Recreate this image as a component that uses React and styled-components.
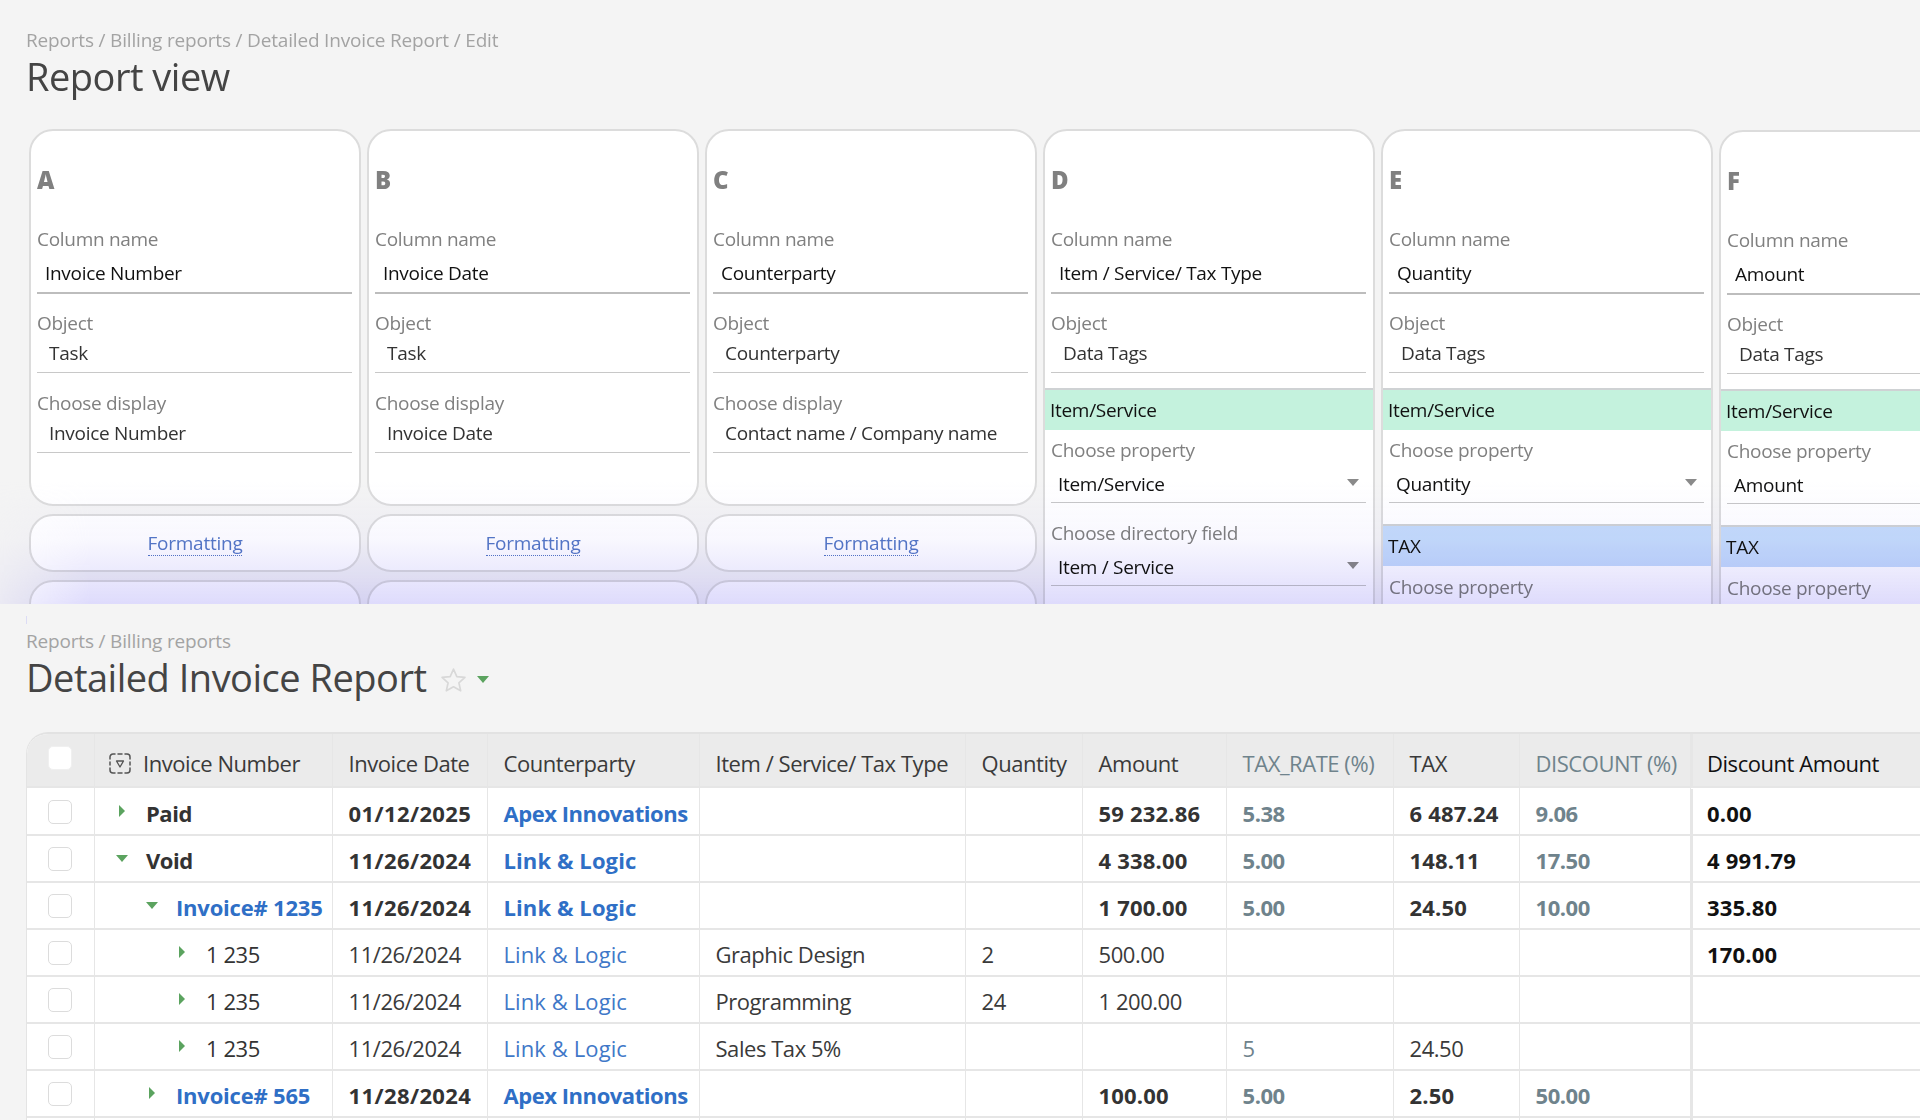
import React from 'react'
import styled, { createGlobalStyle } from 'styled-components'

const font = '"Open Sans", "Noto Sans", sans-serif'

const GlobalStyle = createGlobalStyle`
    html, body {
        margin: 0;
        background: #f4f4f4;
    }
    body {
        font-family: ${font};
        overflow: hidden;
    }
`

const Page = styled.div`
    width: 1920px;
    height: 1120px;
    overflow: hidden;
    background: #f4f4f4;
`

const EditSection = styled.section`
    position: relative;
    isolation: isolate;
    height: 604px;
    overflow: hidden;
    padding: 27px 0 0 26px;
    box-sizing: border-box;
    background: #f4f4f4;

    &::after {
        content: '';
        position: absolute;
        left: 0;
        right: 0;
        bottom: 0;
        height: 124px;
        pointer-events: none;
        mix-blend-mode: multiply;
        background: linear-gradient(
            to bottom,
            rgba(222, 219, 252, 0),
            rgba(222, 219, 252, 0.2) 48%,
            rgba(222, 219, 252, 0.55) 72%,
            rgba(222, 219, 252, 1)
        );
        mask-image: linear-gradient(to right, rgba(0, 0, 0, 0.3), #000 90px);
    }
`

const Breadcrumb = styled.div`
    font-size: 19px;
    line-height: 26px;
    color: #a3a3a3;
    letter-spacing: -0.18px;
`

const Title = styled.h1`
    margin: -1px 0 0;
    font-size: 38px;
    font-weight: 400;
    line-height: 48px;
    color: #444;
    letter-spacing: -0.5px;
    display: flex;
    align-items: center;
`

const Columns = styled.div`
    display: flex;
    gap: 6px;
    margin: 29px 0 0 3px;
`

const Column = styled.div`
    flex: 0 0 332px;
    display: flex;
    flex-direction: column;
    gap: 8px;
    margin-top: ${p => p.$shift || 0}px;
`

const Card = styled.div`
    box-sizing: border-box;
    height: ${p => p.$height || 'auto'};
    flex-shrink: 0;
    background: #fff;
    border: 2px solid #dcdcdc;
    border-radius: 24px;
    padding: 0 7px 0 6px;
`

const Letter = styled.div`
    margin-top: 34px;
    font-size: 24px;
    font-weight: 800;
    line-height: 30px;
    color: #808080;
`

const Label = styled.div`
    margin-top: ${p => p.$gap ?? 18}px;
    font-size: 19px;
    line-height: 24px;
    color: #808080;
    letter-spacing: -0.3px;
`

const Value = styled.div`
    display: flex;
    justify-content: space-between;
    align-items: center;
    padding: ${p => (p.$first ? '10px 9px 7px 8px' : '6px 8px 7px 12px')};
    font-size: 19px;
    line-height: 24px;
    color: ${p => (p.$first ? '#111' : '#333')};
    border-bottom: ${p => (p.$first ? '2px solid #bdbdbd' : '1px solid #c8c8c8')};
    letter-spacing: -0.3px;
`

const SelectValue = styled(Value)`
    padding: 10px 7px 6px 7px;
    color: #111;
`

const Caret = styled.span`
    width: 0;
    height: 0;
    border-left: 6px solid transparent;
    border-right: 6px solid transparent;
    border-top: 7px solid #8a8a8a;
    margin-bottom: 4px;
`

const Band = styled.div`
    margin: ${p => p.$gap}px -7px 0 -6px;
    height: 42px;
    box-sizing: border-box;
    padding: 0 5px;
    font-size: 19px;
    line-height: 40px;
    color: #111;
    background: ${p => p.$color};
    border-top: 2px solid #cfd2d4;
    letter-spacing: -0.3px;
`

const Pill = styled.div`
    box-sizing: border-box;
    height: 58px;
    flex-shrink: 0;
    display: flex;
    align-items: center;
    justify-content: center;
    background: #fff;
    border: 2px solid #dcdcdc;
    border-radius: 24px;
`

const FormatLink = styled.a`
    font-size: 19px;
    line-height: 24px;
    color: #5578c6;
    border-bottom: 1px dotted #5578c6;
    letter-spacing: -0.25px;
`

const ReportSection = styled.section`
    padding: 12px 0 0 26px;
`

const Tick = styled.div`
    width: 1px;
    height: 8px;
    background: #dcdcf5;
    margin-bottom: 4px;
`

const StarButton = styled.span`
    display: inline-flex;
    align-items: center;
    gap: 10px;
    margin: 5px 0 0 14px;
`

const Table = styled.div`
    margin-top: 31px;
    width: 1894px;
    background: #fff;
    border-top: 2px solid #e2e2e2;
    border-left: 1px solid #e4e4e4;
    border-top-left-radius: 22px;
    overflow: hidden;
`

const Row = styled.div`
    display: grid;
    grid-template-columns: 68px 238px 155px 212px 266px 117px 144px 167px 126px 171px 230px;
    height: ${p => (p.$head ? '54px' : '47px')};
    background: ${p => (p.$head ? '#ebebeb' : '#fff')};
`

const Cell = styled.div`
    box-sizing: border-box;
    display: flex;
    align-items: center;
    padding-left: ${p => (p.$pad === undefined ? 15.5 : p.$pad)}px;
    padding-top: ${p => (p.$head ? 6 : 3)}px;
    font-size: 22px;
    font-weight: ${p => (p.$bold ? 700 : 400)};
    color: ${p => p.$color || (p.$bold ? '#333' : '#3a3a3a')};
    border-right: 1px solid #e6e6e6;
    border-bottom: 2px solid #e6e6e6;
    white-space: nowrap;
    letter-spacing: ${p => p.$spacing ?? -0.45}px;
`

const LastCell = styled(Cell)`
    position: relative;
    height: ${p => (p.$head ? '54px' : '47px')};
    margin-top: ${p => (p.$head ? 0 : 1)}px;
    padding-left: 14px;
    color: #111;
    border-right: 0;
    border-left: 2px solid #e6e6e6;

    &::before {
        content: '';
        position: absolute;
        left: -8px;
        bottom: -2px;
        width: 8px;
        height: 2px;
        background: #e6e6e6;
    }
`

const CheckCell = styled(Cell)`
    padding-left: 21px;
    padding-top: 0;
`

const Check = styled.span`
    box-sizing: border-box;
    width: 24px;
    height: 24px;
    background: #fff;
    border: ${p => (p.$head ? '1px solid #f0f0f0' : '1px solid #dcdcdc')};
    border-radius: 5px;
    margin-top: ${p => (p.$head ? '-5px' : '2px')};
`

const NameWrap = styled.span`
    display: flex;
    align-items: center;
    margin-left: ${p => p.$indent}px;
`

const ArrowBox = styled.span`
    flex: 0 0 30px;
    display: flex;
    align-items: center;
    margin-top: -3px;
`

const ArrowRight = styled.span`
    margin-left: 3px;
    width: 0;
    height: 0;
    border-top: 6px solid transparent;
    border-bottom: 6px solid transparent;
    border-left: 6px solid #5ba35f;
`

const ArrowDown = styled.span`
    width: 0;
    height: 0;
    border-left: 6px solid transparent;
    border-right: 6px solid transparent;
    border-top: 7px solid #5ba35f;
`

const Star = () => (
    <svg width="27" height="26" viewBox="0 0 26 25" fill="none">
        <path
            d="M13 2l3.2 7.2 7.8.8-5.8 5.2 1.7 7.7L13 19l-6.9 3.9 1.7-7.7L2 10l7.8-.8z"
            stroke="#d8d8d8"
            strokeWidth="1.6"
            strokeLinejoin="round"
        />
    </svg>
)

const FilterIcon = () => (
    <svg width="22" height="21" viewBox="0 0 22 21" fill="none" style={{ marginRight: 12 }}>
        <path
            d="M1 6V4a3 3 0 0 1 3-3h2M16 1h2a3 3 0 0 1 3 3v2M21 15v2a3 3 0 0 1-3 3h-2M6 20H4a3 3 0 0 1-3-3v-2M1 9v3M21 9v3M9 1h4M9 20h4"
            stroke="#555"
            strokeWidth="1.5"
            strokeLinecap="round"
        />
        <path d="M7.5 8h7L11 14z" stroke="#555" strokeWidth="1.3" strokeLinejoin="round" />
    </svg>
)

const simpleColumns = [
    { letter: 'A', name: 'Invoice Number', object: 'Task', display: 'Invoice Number' },
    { letter: 'B', name: 'Invoice Date', object: 'Task', display: 'Invoice Date' },
    { letter: 'C', name: 'Counterparty', object: 'Counterparty', display: 'Contact name / Company name' },
]

const tagColumns = [
    { letter: 'D', name: 'Item / Service/ Tax Type', property: 'Item/Service', directory: 'Item / Service' },
    { letter: 'E', name: 'Quantity', property: 'Quantity' },
    { letter: 'F', name: 'Amount', property: 'Amount', shift: 1 },
]

const link = '#2f6fc6'
const thinLink = '#3f78c8'
const muted = '#6f838c'

// digits and the short counterparty name run wider in the reference
const wideBold = 0.2
const wideName = 0.1

const rows = [
    { name: 'Paid', indent: 0, arrow: 'right', bold: true, date: '01/12/2025', party: 'Apex Innovations', amount: '59 232.86', rate: '5.38', tax: '6 487.24', disc: '9.06', last: '0.00' },
    { name: 'Void', indent: 0, arrow: 'down', bold: true, date: '11/26/2024', party: 'Link & Logic', amount: '4 338.00', rate: '5.00', tax: '148.11', disc: '17.50', last: '4 991.79' },
    { name: 'Invoice# 1235', indent: 30, arrow: 'down', bold: true, isLink: true, date: '11/26/2024', party: 'Link & Logic', amount: '1 700.00', rate: '5.00', tax: '24.50', disc: '10.00', last: '335.80' },
    { name: '1 235', indent: 60, arrow: 'right', date: '11/26/2024', party: 'Link & Logic', item: 'Graphic Design', qty: '2', amount: '500.00', last: '170.00' },
    { name: '1 235', indent: 60, arrow: 'right', date: '11/26/2024', party: 'Link & Logic', item: 'Programming', qty: '24', amount: '1 200.00' },
    { name: '1 235', indent: 60, arrow: 'right', date: '11/26/2024', party: 'Link & Logic', item: 'Sales Tax 5%', rate: '5', tax: '24.50' },
    { name: 'Invoice# 565', indent: 30, arrow: 'right', bold: true, isLink: true, date: '11/28/2024', party: 'Apex Innovations', amount: '100.00', rate: '5.00', tax: '2.50', disc: '50.00' },
    {},
]

const App = () => (
    <Page>
        <GlobalStyle />
        <EditSection>
            <Breadcrumb>Reports / Billing reports / Detailed Invoice Report / Edit</Breadcrumb>
            <Title>Report view</Title>
            <Columns>
                {simpleColumns.map(c => (
                    <Column key={c.letter}>
                        <Card $height="377px">
                            <Letter>{c.letter}</Letter>
                            <Label $gap={32}>Column name</Label>
                            <Value $first>{c.name}</Value>
                            <Label $gap={17}>Object</Label>
                            <Value>{c.object}</Value>
                            <Label>Choose display</Label>
                            <Value>{c.display}</Value>
                        </Card>
                        <Pill>
                            <FormatLink>Formatting</FormatLink>
                        </Pill>
                        <Pill />
                    </Column>
                ))}
                {tagColumns.map(c => (
                    <Column key={c.letter} $shift={c.shift}>
                        <Card $height="600px">
                            <Letter>{c.letter}</Letter>
                            <Label $gap={32}>Column name</Label>
                            <Value $first>{c.name}</Value>
                            <Label $gap={17}>Object</Label>
                            <Value>Data Tags</Value>
                            <Band $gap={15} $color="#c4f2dd">Item/Service</Band>
                            <Label $gap={8}>Choose property</Label>
                            <SelectValue>
                                {c.property}
                                <Caret />
                            </SelectValue>
                            {c.directory ? (
                                <>
                                    <Label>Choose directory field</Label>
                                    <SelectValue>
                                        {c.directory}
                                        <Caret />
                                    </SelectValue>
                                </>
                            ) : (
                                <>
                                    <Band $gap={21} $color="#c5dcfa">TAX</Band>
                                    <Label $gap={9}>Choose property</Label>
                                </>
                            )}
                        </Card>
                    </Column>
                ))}
            </Columns>
        </EditSection>
        <ReportSection>
            <Tick />
            <Breadcrumb>Reports / Billing reports</Breadcrumb>
            <Title>
                Detailed Invoice Report
                <StarButton>
                    <Star />
                    <ArrowDown />
                </StarButton>
            </Title>
            <Table>
                <Row $head>
                    <CheckCell $head>
                        <Check $head />
                    </CheckCell>
                    <Cell $head $pad={14}>
                        <FilterIcon />
                        Invoice Number
                    </Cell>
                    <Cell $head>Invoice Date</Cell>
                    <Cell $head>Counterparty</Cell>
                    <Cell $head>Item / Service/ Tax Type</Cell>
                    <Cell $head>Quantity</Cell>
                    <Cell $head>Amount</Cell>
                    <Cell $head $color={muted}>TAX_RATE (%)</Cell>
                    <Cell $head>TAX</Cell>
                    <Cell $head $color={muted}>DISCOUNT (%)</Cell>
                    <LastCell $head>Discount Amount</LastCell>
                </Row>
                {rows.map((r, i) => (
                    <Row key={i}>
                        <CheckCell>{r.date && <Check />}</CheckCell>
                        <Cell $pad={21} $bold={r.bold} $color={r.isLink ? link : '#333'} $spacing={r.isLink ? -0.2 : undefined}>
                            {r.name && (
                                <NameWrap $indent={r.indent}>
                                    <ArrowBox>{r.arrow === 'down' ? <ArrowDown /> : <ArrowRight />}</ArrowBox>
                                    {r.name}
                                </NameWrap>
                            )}
                        </Cell>
                        <Cell $bold={r.bold} $spacing={r.bold ? wideBold + 0.2 : undefined}>{r.date}</Cell>
                        <Cell
                            $bold={r.bold}
                            $color={r.bold ? link : thinLink}
                            $spacing={r.party === 'Link & Logic' ? wideName : undefined}
                        >
                            {r.party}
                        </Cell>
                        <Cell>{r.item}</Cell>
                        <Cell>{r.qty}</Cell>
                        <Cell $bold={r.bold} $spacing={r.bold ? wideBold : undefined}>{r.amount}</Cell>
                        <Cell $bold={r.bold} $color={muted}>{r.rate}</Cell>
                        <Cell $bold={r.bold} $spacing={r.bold ? wideBold : undefined}>{r.tax}</Cell>
                        <Cell $bold={r.bold} $color={muted}>{r.disc}</Cell>
                        <LastCell $bold $spacing={wideBold}>{r.last}</LastCell>
                    </Row>
                ))}
            </Table>
        </ReportSection>
    </Page>
)

export default App
